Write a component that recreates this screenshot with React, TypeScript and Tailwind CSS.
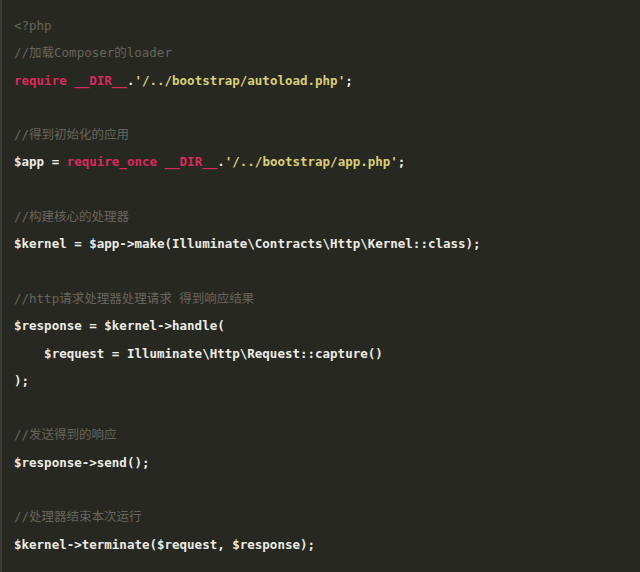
import React from 'react';

type Tok = { t: string; c?: 'kw' | 'str' | 'cm' };

const lines: Tok[][] = [
  [{ t: '<?php', c: 'cm' }],
  [{ t: '//加载Composer的loader', c: 'cm' }],
  [{ t: 'require', c: 'kw' }, { t: ' ' }, { t: '__DIR__', c: 'kw' }, { t: '.' }, { t: "'/../bootstrap/autoload.php'", c: 'str' }, { t: ';' }],
  [],
  [{ t: '//得到初始化的应用', c: 'cm' }],
  [{ t: '$app = ' }, { t: 'require_once', c: 'kw' }, { t: ' ' }, { t: '__DIR__', c: 'kw' }, { t: '.' }, { t: "'/../bootstrap/app.php'", c: 'str' }, { t: ';' }],
  [],
  [{ t: '//构建核心的处理器', c: 'cm' }],
  [{ t: '$kernel = $app->make(Illuminate\\Contracts\\Http\\Kernel::class);' }],
  [],
  [{ t: '//http请求处理器处理请求 得到响应结果', c: 'cm' }],
  [{ t: '$response = $kernel->handle(' }],
  [{ t: '    $request = Illuminate\\Http\\Request::capture()' }],
  [{ t: ');' }],
  [],
  [{ t: '//发送得到的响应', c: 'cm' }],
  [{ t: '$response->send();' }],
  [],
  [{ t: '//处理器结束本次运行', c: 'cm' }],
  [{ t: '$kernel->terminate($request, $response);' }],
];

const tokClass = (c?: Tok['c']) => {
  if (c === 'kw') return 'text-[#d92a5c] font-semibold';
  if (c === 'str') return 'text-[#d9cf78] font-semibold';
  if (c === 'cm') return 'text-[#67655a]';
  return 'text-[#ecece6] font-semibold';
};

const App = () => {
  return (
    <div className="w-[640px] h-[572px] bg-[#272822] border-l-2 border-[#3a3b36] overflow-hidden">
      <pre className="pt-[12px] pl-[12px] font-['DejaVu_Sans_Mono','Noto_Sans_CJK_SC',monospace] text-[12.5px] leading-[27.3px]">
        {lines.map((line, i) => (
          <div key={i} className="h-[27.3px] whitespace-pre">
            {line.map((tok, j) => (
              <span key={j} className={tokClass(tok.c)}>
                {tok.t}
              </span>
            ))}
          </div>
        ))}
      </pre>
    </div>
  );
};

export default App;
